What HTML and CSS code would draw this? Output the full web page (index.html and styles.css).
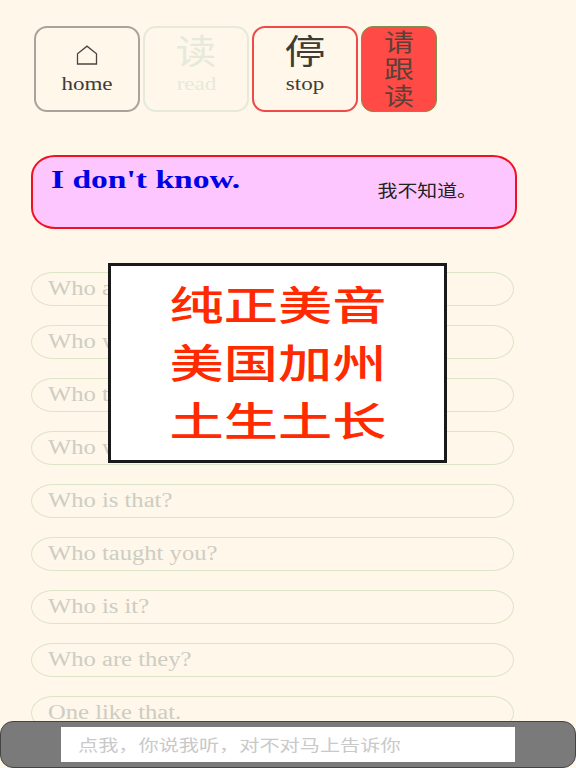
FILE: index.html
```html
<!DOCTYPE html>
<html lang="zh">
<head>
<meta charset="utf-8">
<title>Read</title>
<link rel="stylesheet" href="styles.css">
</head>
<body>
<div class="app">
  <div class="toolbar">
    <div class="btn btn-home">
      <svg class="home-icon" viewBox="0 0 22 20" width="22" height="20"><path d="M1.500 19V8.800L11 1.200l9.500 7.600V19Z" fill="none" stroke="#4a463f" stroke-width="1.300"/></svg>
      <span class="label">home</span>
    </div>
    <div class="btn btn-read">
      <span class="glyph">读</span>
      <span class="label">read</span>
    </div>
    <div class="btn btn-stop">
      <span class="glyph">停</span>
      <span class="label">stop</span>
    </div>
    <div class="btn-follow"><span>请</span><span>跟</span><span>读</span></div>
  </div>

  <div class="banner">
    <div class="en">I don't know.</div>
    <div class="zh">我不知道。</div>
  </div>

  <div class="list">
    <div class="pill"><span>Who are you?</span></div>
    <div class="pill"><span>Who was that?</span></div>
    <div class="pill"><span>Who told you?</span></div>
    <div class="pill"><span>Who was it?</span></div>
    <div class="pill"><span>Who is that?</span></div>
    <div class="pill"><span>Who taught you?</span></div>
    <div class="pill"><span>Who is it?</span></div>
    <div class="pill"><span>Who are they?</span></div>
    <div class="pill"><span>One like that.</span></div>
  </div>
</div>

<div class="overlay"><span>纯正美音</span><span>美国加州</span><span>土生土长</span></div>

<div class="bottom">
  <div class="prompt"><span>点我，你说我听，对不对马上告诉你</span></div>
</div>
</body>
</html>
```
FILE: styles.css
```css
html, body {
  margin: 0;
  height: 100%;
  overflow: hidden;
  background: #fff7ea;
}
.app {
  height: 768px;
  overflow: hidden;
  padding: 26px 59px 0 31px;
  box-sizing: border-box;
  font-family: "Liberation Serif", "Noto Sans CJK SC", serif;
}
.toolbar {
  display: flex;
  gap: 3px;
  margin-left: 3px;
  height: 86px;
}
.btn {
  width: 106px;
  box-sizing: border-box;
  border: 2.500px solid #a8a49c;
  border-radius: 13px;
  display: flex;
  flex-direction: column;
  align-items: center;
  color: #3f3b35;
}
.home-icon { margin-top: 17px; }
.btn-home .label { margin-top: 9px; }
.label {
  font-size: 18px;
  line-height: 20px;
  transform: scaleX(1.28);
}
.glyph {
  font-family: "Noto Sans CJK SC", sans-serif;
  font-size: 34px;
  line-height: 40px;
  margin-top: 2px;
  margin-bottom: 4px;
  transform: scaleX(1.2);
}
.btn-read {
  border-color: #e6eada;
  color: #e6eada;
}
.btn-stop { border-color: #ee4a4a; }
.btn-follow {
  width: 76px;
  box-sizing: border-box;
  border: 1.500px solid #7c9150;
  border-radius: 12px;
  background: #ff4a45;
  color: #5c4038;
  font-family: "Noto Sans CJK SC", sans-serif;
  font-size: 24px;
  line-height: 27px;
  text-align: center;
  display: flex;
  flex-direction: column;
  align-items: center;
}
.btn-follow span { transform: scaleX(1.25); }
.banner {
  margin-top: 43px;
  height: 74px;
  box-sizing: border-box;
  border: 2.500px solid #ee1122;
  border-radius: 24px / 21px;
  background: #fec6fe;
  display: flex;
  justify-content: space-between;
  padding: 8px 38px 0 18px;
  width: 486px;
}
.en {
  color: #0000e6;
  font-weight: bold;
  font-size: 26px;
  line-height: 30px;
  transform: scaleX(1.29);
  transform-origin: left;
}
.zh {
  font-family: "Noto Sans CJK SC", sans-serif;
  font-size: 17px;
  line-height: 24px;
  margin-top: 13px;
  color: #222;
  transform: scaleX(1.17);
  transform-origin: right;
}
.list {
  margin-top: 43px;
  display: flex;
  flex-direction: column;
  gap: 19px;
}
.pill {
  width: 483px;
  height: 34px;
  box-sizing: border-box;
  flex: none;
  border: 1.500px solid #dde5c8;
  border-radius: 22px / 17px;
  padding-left: 16px;
  color: #cdcdc2;
  font-size: 20px;
  line-height: 30px;
}
.pill span {
  display: inline-block;
  transform: scaleX(1.23);
  transform-origin: left;
}
.overlay {
  position: absolute;
  left: 108px;
  top: 263px;
  width: 339px;
  height: 200px;
  box-sizing: border-box;
  background: #fff;
  border: 3px solid #1a1a1a;
  font-family: "Noto Sans CJK SC", sans-serif;
  font-weight: 500;
  font-size: 40px;
  line-height: 58px;
  color: #ff2a00;
  display: flex;
  flex-direction: column;
  align-items: center;
  padding-top: 8px;
}
.overlay span { transform: scaleX(1.355); }
.bottom {
  position: absolute;
  left: 0;
  right: 0;
  top: 721px;
  height: 47px;
  box-sizing: border-box;
  background: #7a7a7a;
  border: 1px solid #444;
  border-radius: 13px;
  padding: 5px 0 0 60px;
}
.prompt {
  width: 454px;
  height: 35px;
  box-sizing: border-box;
  background: #fff;
  color: #c9c9c9;
  font-family: "Noto Sans CJK SC", sans-serif;
  font-size: 16px;
  line-height: 35px;
  padding-left: 17px;
}
.prompt span {
  display: inline-block;
  transform: scaleX(1.26);
  transform-origin: left;
}
```
